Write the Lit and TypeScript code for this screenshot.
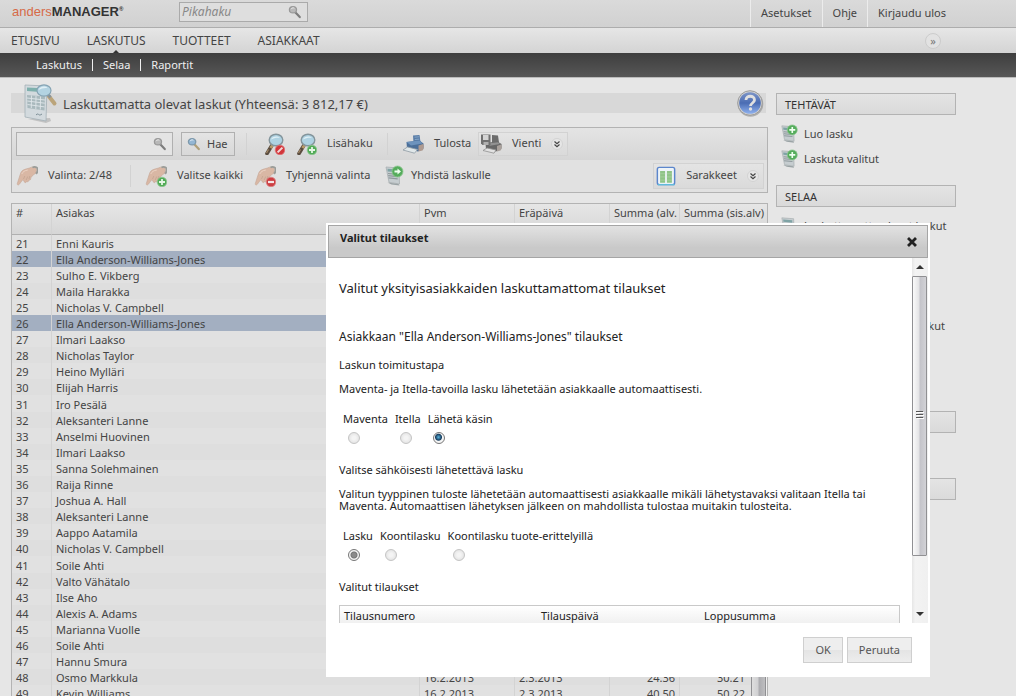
import { LitElement, html, css, svg, nothing } from "lit";
import { customElement, property } from "lit/decorators.js";
import { classMap } from "lit/directives/class-map.js";

const plus = svg`<circle cx="17" cy="17" r="4.800" fill="#52ab57" stroke="#8fc892" stroke-width=".8"/><path d="M17 14v6M14 17h6" stroke="#e4f5e4" stroke-width="1.800"/>`;
const minus = svg`<circle cx="17" cy="17" r="4.800" fill="#cc3f43" stroke="#dd8587" stroke-width=".8"/><path d="M14 17h6" stroke="#f4e6e6" stroke-width="2.200"/>`;
const banned = svg`<circle cx="17" cy="17" r="4.800" fill="#d2363a" stroke="#e07377" stroke-width=".8"/><path d="M14.600 19.400l4.800-4.800" stroke="#f0dada" stroke-width="2"/>`;
const lens = svg`<path d="M8.500 13L4 20.500" stroke="#5a4c3f" stroke-width="3.600" stroke-linecap="round"/><path d="M10 11.500L7.500 15" stroke="#b89a6a" stroke-width="2.800"/><path d="M5.500 16.500l-2 3.500" stroke="#a58a68" stroke-width="1.200"/><ellipse cx="13" cy="7" rx="6.800" ry="5.800" fill="#aed2e2" stroke="#84959c" stroke-width="1.400"/><path d="M8 6.500c1-3 6-4 9-1.600-3-.6-6 0-9 1.600z" fill="#e0f0f6"/>`;
const hand = svg`<path d="M20.500 4c-1-2-5-2.500-7-1L9 4.300C6.500 5 5 6.500 4.200 9.500L1.300 18.500c-.4 1.500 1.200 2 2 .8l3.200-4.300 1 .2 1 2c.8.9 2 .3 1.800-.8l1 .3c1 .2 1.500-.7 1.300-1.500l1.200-.2c1-.3 1.200-1.300.8-2l2.500-3 3-2z" fill="#d9b7a4" stroke="#c4a695" stroke-width=".6"/><path d="M16.500 2.500c2-1.200 4.800-.5 5.300 1.800 0 1.900-.6 3.500-1.800 4.500" fill="none" stroke="#9a9c98" stroke-width="1.800"/><path d="M7.500 14l1.300-3M10.200 15l1.500-3.500M12.900 14l1-3" stroke="#bb9d8b" stroke-width=".6" fill="none"/><path d="M5.800 9c1-2.300 3-3.500 6-4" stroke="#ecd3c4" fill="none"/>`;
const sheet = svg`<path d="M2 2l13 1 .5 16-10.500-1.700z" fill="#c6cdd0" stroke="#a3abad" stroke-width=".7"/><path d="M3.500 3.800l10 .8v2.700l-9.800-.9z" fill="#7fa3a5"/><path d="M4 8.500l9.500.9M4.200 10.700l9.400.9M4.500 12.900l9.200.9" stroke="#8f999c" stroke-width="1.200"/><path d="M3.500 17.500l11 1.600 1 1.500-8-1z" fill="#9aa3a5"/>`;

const icons: Record<string, unknown> = {
  clear: svg`${lens}${banned}`,
  more: svg`${lens}${plus}`,
  hand,
  handPlus: svg`${hand}${plus}`,
  handMinus: svg`${hand}${minus}`,
  sheetPlus: svg`${sheet}<circle cx="13.500" cy="6.500" r="5.500" fill="#55ac5c" stroke="#8fc892" stroke-width=".8"/><path d="M13.500 3.200v6.600M10.200 6.500h6.600" stroke="#effff0" stroke-width="1.800"/>`,
  sheetArrow: svg`${sheet}<circle cx="13.500" cy="6.500" r="5.500" fill="#55ac5c" stroke="#8fc892" stroke-width=".8"/><path d="M10.500 5.500h3v-2l3.500 3-3.500 3v-2h-3z" fill="#effff0"/>`,
  sheet,
  printer: svg`<path d="M11 2.500l6.500-.5 1 7-7 1z" fill="#577ba6"/><path d="M12.500 4.200l4.500-.4M12.800 6.500l4.600-.4" stroke="#86a6c8"/><path d="M4.500 9l13-1.500 4 3v5L16 18.500l-11-3z" fill="#4b6f99"/><path d="M4.500 9l13-1.500 3 3L9 12.500z" fill="#6d93bd"/><path d="M16.500 12.500l4.500-1.500c1.200 1 1 4.500-.5 6.500l-4 1z" fill="#ae9a90"/><path d="M1 17l4.500-3 10 2.500-3 3.700z" fill="#e0e7e9" stroke="#8f9ba3" stroke-width=".8"/>`,
  exporter: svg`<path d="M12 2l6 .5 1 7-7 1z" fill="#6c6c6c"/><path d="M5.500 10l12-1.500 4 2.500v4.500L16 18.500 6 16z" fill="#676767"/><path d="M7 10.500l11-1.200 2 1.700-10 1.700z" fill="#929292"/><path d="M17 13l4-1.500c1.200 1 1 4-.5 6l-3.500 1z" fill="#a9a19c"/><path d="M3 17.500l4-2.500 9 2-2 3.200z" fill="#e2e2e2" stroke="#909090" stroke-width=".8"/><path d="M1 1.500h9.500V12H2.500L1 10.500z" fill="#707070"/><path d="M3 2h5.500v5H3z" fill="#d4d4d4"/><path d="M3.500 9h5v3h-5z" fill="#b0b0b0"/>`,
  columns: svg`<rect x="1.500" y="1.500" width="19" height="19" rx="2" fill="#eef4f8" stroke="#5c86cc" stroke-width="1.600"/><path d="M2 20.500h18.500" stroke="#60bbdc" stroke-width="1.500"/><path d="M4.500 5.500h5.500v13H4.500zM12 5.500h5.500v13H12z" fill="#8fc487"/><path d="M4.500 8.500h5.500M4.500 12h5.500M4.500 15.500h5.500M12 8.500h5.500M12 12h5.500M12 15.500h5.500" stroke="#a9d2a2" stroke-width=".8"/>`,
  search: svg`<path d="M11 11l7.500 8" stroke="#7d7d7d" stroke-width="3.400" stroke-linecap="round"/><ellipse cx="7.800" cy="7.500" rx="5.600" ry="5" fill="#b8b8b8" stroke="#999" stroke-width="2"/><path d="M5 6.500c1-2 3-2.500 5-1.500" stroke="#eee" stroke-width="1.500" fill="none"/>`,
  searchColor: svg`<path d="M11.500 11.500l7 7.500" stroke="#b0a07a" stroke-width="3.600" stroke-linecap="round"/><ellipse cx="8" cy="7.500" rx="5.800" ry="5" fill="#93b6d3" stroke="#7d98aa" stroke-width="2"/><path d="M5 6.500c1-2 3-2.500 5-1.500" stroke="#eef6fb" stroke-width="1.500" fill="none"/>`,
};

const icon = (name: string, cls = "icon") =>
  html`<svg class=${cls} viewBox="0 0 22 22" aria-hidden="true">${icons[name]}</svg>`;

const chevron = html`<svg class="chevron" viewBox="0 0 12 12" aria-hidden="true"><circle cx="6" cy="6" r="5.500" fill="#e6e6e6" stroke="#d2d2d2"/><path d="M3.500 3.500L6 5.700l2.500-2.200M3.500 6.500L6 8.700l2.500-2.200" fill="none" stroke="#444" stroke-width="1.200"/></svg>`;

interface Row { name: string; date?: string; due?: string; net?: string; gross?: string }

const rows: Row[] = [
  ...[
    "Enni Kauris", "Ella Anderson-Williams-Jones", "Sulho E. Vikberg", "Maila Harakka", "Nicholas V. Campbell",
    "Ella Anderson-Williams-Jones", "Ilmari Laakso", "Nicholas Taylor", "Heino Mylläri", "Elijah Harris",
    "Iro Pesälä", "Aleksanteri Lanne", "Anselmi Huovinen", "Ilmari Laakso", "Sanna Solehmainen", "Raija Rinne",
    "Joshua A. Hall", "Aleksanteri Lanne", "Aappo Aatamila", "Nicholas V. Campbell", "Soile Ahti",
    "Valto Vähätalo", "Ilse Aho", "Alexis A. Adams", "Marianna Vuolle", "Soile Ahti", "Hannu Smura",
  ].map((name) => ({ name })),
  { name: "Osmo Markkula", date: "16.2.2013", due: "2.3.2013", net: "24.36", gross: "30.21" },
  { name: "Kevin Williams", date: "16.2.2013", due: "2.3.2013", net: "40.50", gross: "50.22" },
];
const firstRow = 21;
const selected = new Set([22, 26]);

const base = css`
  * { box-sizing: border-box; }
  button, input { font: inherit; color: inherit; margin: 0; }
  a { color: inherit; text-decoration: none; }
  h1, h2, h3, h4, p, ul { margin: 0; padding: 0; font-weight: 400; list-style: none; }
  .icon { width: 22px; height: 22px; flex: none; display: block; }
`;

@customElement("side-bar")
class SideBar extends LitElement {
  static styles = [base, css`
    :host { display: block; }
    h2 { height: 22px; border: 1px solid #b3b3b3; background: linear-gradient(#e4e4e4, #dadada); padding-left: 8px; line-height: 22px; font-size: 11px; color: #333; }
    ul { padding: 6px 0 14px; }
    a { display: flex; align-items: center; gap: 4px; min-height: 25px; padding: 5px 0 5px 4px; line-height: 12px; }
    .icon { width: 20px; height: 22px; margin: -4px 0; }
  `];
  sections = [
    { title: "TEHTÄVÄT", icon: "sheetPlus", links: ["Luo lasku", "Laskuta valitut"] },
    { title: "SELAA", icon: "sheet", links: ["Laskuttamatta olevat laskut", "Kaikki laskut", "Avoimet laskut", "Erääntyneet laskut", "Maksukehotukset ja -laskut", "Hyvityslaskut", "Luottotappiokirjaukset kuukausittain"] },
    { title: "RAPORTIT", icon: "sheet", links: ["Myynti"] },
    { title: "MUUT", icon: "sheet", links: ["Ohjeet"] },
  ];
  render() {
    return this.sections.map((s) => html`
      <section>
        <h2>${s.title}</h2>
        <ul>${s.links.map((l) => html`<li><a href="#">${icon(s.icon)}<span>${l}</span></a></li>`)}</ul>
      </section>`);
  }
}

@customElement("scroll-track")
class ScrollTrack extends LitElement {
  @property({ type: Number }) size = 77;
  @property({ type: Boolean }) plain = false;
  static styles = css`
    :host { display: flex; flex-direction: column; align-items: center; width: 16px; background: linear-gradient(90deg, #e6e6e6, #f3f3f3 20%, #f0f0f0); }
    .arrow { height: 18px; flex: none; display: flex; align-items: center; }
    .area { flex: 1; width: 100%; }
    .thumb { box-sizing: border-box; width: 15px; border: 1px solid #909093; border-radius: 1px; background: linear-gradient(90deg, #fafafa, #e4e4e6 45%, #c4c4ca 55%, #d2d2d6); display: flex; align-items: center; justify-content: center; }
    .plain { background: linear-gradient(90deg, #dedede, #d0d0d2 45%, #acacb0 55%, #bebec0); }
    svg { display: block; }
  `;
  render() {
    const arrow = (d: string) => this.plain ? nothing : html`<div class="arrow"><svg width="8" height="4"><path d=${d} fill="#333"/></svg></div>`;
    return html`
      ${arrow("M0 4l4-4 4 4z")}
      <div class="area"><div class="thumb ${this.plain ? "plain" : ""}" style="height:${this.size}%">
        <svg width="8" height="9"><path d="M0 .5h7M0 3.500h7M0 6.500h7" stroke="#555"/><path d="M1 1.500h7M1 4.500h7M1 7.500h7" stroke="#fff"/></svg>
      </div></div>
      ${arrow("M0 0l4 4 4-4z")}`;
  }
}

@customElement("order-dialog")
class OrderDialog extends LitElement {
  static styles = [base, css`
    :host { display: block; background: #fff; padding: 2px; color: #222; }
    header { display: flex; justify-content: space-between; height: 33px; padding: 0 10px 0 11px; border: 1px solid #a5a5a5; background: linear-gradient(#e2e2e2, #c9c9c9 70%); }
    h2 { font-size: 11px; font-weight: 700; line-height: 24px; }
    .close { border: 0; background: none; padding: 0; width: 10px; display: flex; align-items: center; }
    .body { display: flex; height: 365px; }
    .content { flex: 1; min-width: 0; overflow: hidden; padding: 20px 12px 0 11px; }
    .lead { font-size: 13px; line-height: 20px; margin-bottom: 29px; }
    .customer { font-size: 12px; line-height: 20px; margin-bottom: 10px; }
    h4 { font-size: 11px; line-height: 16px; }
    .note { line-height: 12px; margin: 10px 0 17px; }
    .choices { display: flex; gap: 7px; border: 0; margin: 0 0 18px; padding: 0 0 0 4px; }
    .choices label { display: flex; flex-direction: column; gap: 6px; line-height: 14px; }
    input { appearance: none; width: 12px; height: 12px; margin-left: 5px; border: 1px solid #c4c4c4; border-radius: 50%; background: radial-gradient(#f4f4f4 25%, #dcdcdc); }
    input:checked { border-color: #777; background: radial-gradient(circle, #8a8a8a 2px, #777 3px, #f5f5f5 4px); }
    .blue input:checked { background: radial-gradient(circle at 45% 42%, #59b5df 0, #173d5f 3px, #f5f5f5 4px); }
    table { width: 100%; margin-top: 10px; border: 1px solid #c9c9c9; border-collapse: separate; border-spacing: 0; table-layout: fixed; background: linear-gradient(#fff, #eee); }
    th { text-align: left; font-weight: 400; height: 20px; padding: 0 4px; }
    .number { width: 197px; } .day { width: 163px; }
    footer { display: flex; justify-content: flex-end; gap: 4px; padding: 14px 16px 12px; }
    footer button { height: 26px; padding: 0 11px; border: 1px solid #cfcfcf; background: linear-gradient(#eee 50%, #e4e4e4 50%, #ededed); color: #555; }
  `];
  choice(name: string, cls: string, options: string[], checked: number) {
    return html`<fieldset class="choices ${cls}">${options.map((o, i) => html`
      <label>${o}<input type="radio" name=${name} ?checked=${i === checked}></label>`)}</fieldset>`;
  }
  render() {
    return html`
      <header><h2>Valitut tilaukset</h2>
        <button class="close" aria-label="Sulje"><svg width="10" height="10"><path d="M2 2l6 6M8 2l-6 6" stroke="#222" stroke-width="2.800" stroke-linecap="square"/></svg></button></header>
      <div class="body">
        <div class="content">
          <h3 class="lead">Valitut yksityisasiakkaiden laskuttamattomat tilaukset</h3>
          <h3 class="customer">Asiakkaan "Ella Anderson-Williams-Jones" tilaukset</h3>
          <h4>Laskun toimitustapa</h4>
          <p class="note">Maventa- ja Itella-tavoilla lasku lähetetään asiakkaalle automaattisesti.</p>
          ${this.choice("delivery", "blue", ["Maventa", "Itella", "Lähetä käsin"], 2)}
          <h4>Valitse sähköisesti lähetettävä lasku</h4>
          <p class="note">Valitun tyyppinen tuloste lähetetään automaattisesti asiakkaalle mikäli lähetystavaksi valitaan Itella tai Maventa. Automaattisen lähetyksen jälkeen on mahdollista tulostaa muitakin tulosteita.</p>
          ${this.choice("type", "", ["Lasku", "Koontilasku", "Koontilasku tuote-erittelyillä"], 0)}
          <h4>Valitut tilaukset</h4>
          <table><thead><tr><th class="number">Tilausnumero</th><th class="day">Tilauspäivä</th><th>Loppusumma</th></tr></thead></table>
        </div>
        <scroll-track .size=${85}></scroll-track>
      </div>
      <footer><button>OK</button><button>Peruuta</button></footer>`;
  }
}

@customElement("app-root")
class AppRoot extends LitElement {
  static styles = [base, css`
    :host { display: block; position: relative; height: 100vh; overflow: hidden; background: #e6e6e6; color: #444; font: 11px/16px "Noto Sans", "Open Sans", sans-serif; }
    .top { display: flex; height: 28px; border-bottom: 1px solid #adadad; background: linear-gradient(#dadada, #d1d1d1); }
    .logo { width: 179px; padding-left: 12px; font: 700 13px/24px "Liberation Sans", sans-serif; color: #333; flex: none; }
    .logo span { font-weight: 400; color: #d66a48; }
    .logo sup { font-size: 6px; line-height: 6px; vertical-align: 5px; }
    .quick { display: flex; align-items: center; width: 129px; height: 20px; margin-top: 2px; border: 1px solid #aaa; background: #dedede; }
    .quick input, .find input { flex: 1; min-width: 0; border: 0; background: none; padding: 0 2px; outline: 0; }
    .quick input { font-size: 12px; font-style: italic; }
    .quick input::placeholder { color: #888; }
    .small { width: 14px; height: 14px; flex: none; display: block; }
    .quick .small, .find .small { margin: 0 5px; }
    .account { display: flex; margin-left: auto; padding-right: 60px; }
    .account a { padding: 0 10px; line-height: 26px; border-left: 1px solid #ececec; }
    .nav { display: flex; align-items: center; gap: 27px; height: 25px; padding: 0 75px 0 11px; background: linear-gradient(#e6e6e6, #d4d4d4); font-size: 12px; }
    .nav a { position: relative; }
    .nav .on::after { content: ""; position: absolute; left: 50%; bottom: -4px; margin-left: -3px; border: 3px solid transparent; border-top: 0; border-bottom-color: #333; }
    .go { margin-left: auto; width: 16px; height: 16px; border: 1px solid #ccc; border-radius: 50%; background: #e2e2e2; padding: 0; font-size: 11px; line-height: 12px; color: #777; }
    .sub { display: flex; align-items: center; height: 25px; padding-left: 26px; border-bottom: 1px solid #bbb; background: linear-gradient(#3e3e3e, #575757); color: #f0f0f0; }
    .sub a { padding: 0 10px; line-height: 12px; }
    .sub a + a { border-left: 1px solid #f0f0f0; }
    .page { display: grid; grid-template-columns: minmax(0, 1fr) 180px; gap: 8px; padding: 15px 60px 0 11px; }
    .title { display: flex; align-items: center; height: 20px; margin-right: 2px; padding-left: 8px; background: #d8d8d8; }
    h1 { flex: 1; font-size: 13px; line-height: 20px; padding-top: 2px; }
    .big { width: 44px; height: 44px; flex: none; }
    .help { border: 0; background: none; padding: 0; width: 28px; height: 28px; margin-right: 2px; }
    .tools { margin-top: 14px; border: 1px solid #b3b3b3; background: #e1e1e1; }
    .line { display: grid; align-items: center; height: 32px; }
    .line.one { grid-template-columns: 165px 65px 17px 32px 92px 15px 76px 1fr; background: linear-gradient(#e4e4e4, #d6d6d6); padding-left: 4px; }
    .line.two { grid-template-columns: 114px 15px 109px 130px 1fr auto; padding: 0 3px 0 4px; }
    .find { display: flex; align-items: center; width: 157px; height: 24px; border: 1px solid #b0b0b0; background: #e4e4e4; }
    .hae { display: flex; align-items: center; gap: 6px; width: 54px; height: 24px; padding: 0 5px; border: 1px solid #b0b0b0; background: linear-gradient(#e4e4e4, #d8d8d8); }
    .tool { display: flex; align-items: center; gap: 10px; border: 0; background: none; padding: 0; line-height: 14px; white-space: nowrap; text-align: left; }
    .tool span { padding-bottom: 2px; }
    .tight { gap: 5px; }
    .drop { width: max-content; height: 24px; padding: 0 4px 0 1px; border: 1px solid #d2d2d2; background: linear-gradient(#e4e4e4, #dadada); }
    .line.two .drop { height: 26px; padding-left: 2px; }
    .line.two .drop .icon { width: 20px; height: 20px; }
    .chevron { width: 12px; height: 12px; }
    .sep { width: 1px; height: 22px; background: #d2d2d2; }
    .list { position: relative; margin-top: 10px; border: 1px solid #b3b3b3; }
    .rail { position: absolute; top: 31px; right: 0; bottom: 0; }
    table { width: 100%; table-layout: fixed; border-collapse: separate; border-spacing: 0; }
    th { height: 31px; padding: 1px 4px; text-align: left; vertical-align: top; font-weight: 400; border-bottom: 1px solid #b0b0b0; background: linear-gradient(#e6e6e6, #d6d6d6); white-space: nowrap; overflow: hidden; }
    td { height: 16px; padding: 2px 4px 0; line-height: 14px; white-space: nowrap; background: #e1e1e1; }
    th + th, td + td { border-left: 1px solid #d3d3d3; }
    tr:nth-child(even) td { background: #dedede; }
    tr:nth-child(10n + 11) td { height: 17px; }
    tr.picked td { background: #a3afc1; }
    .num { width: 39px; } .date { width: 95px; } .sum { width: 70px; } .total { width: 88px; }
    td.right { text-align: right; }
    td.right:last-child { padding-right: 22px; }
    .dialog { position: absolute; top: 223px; left: 326px; width: 604px; }
  `];
  render() {
    return html`
      <header class="top">
        <div class="logo"><span>anders</span>MANAGER<sup>®</sup></div>
        <label class="quick"><input type="search" placeholder="Pikahaku" aria-label="Pikahaku">${icon("search", "small")}</label>
        <nav class="account"><a href="#">Asetukset</a><a href="#">Ohje</a><a href="#">Kirjaudu ulos</a></nav>
      </header>
      <nav class="nav">
        <a href="#">ETUSIVU</a><a href="#" class="on">LASKUTUS</a><a href="#">TUOTTEET</a><a href="#">ASIAKKAAT</a>
        <button class="go">»</button>
      </nav>
      <nav class="sub"><a href="#">Laskutus</a><a href="#">Selaa</a><a href="#">Raportit</a></nav>
      <div class="page">
        <main>
          <div class="title">
            <svg class="big" viewBox="0 0 44 44" aria-hidden="true">
              <path d="M9 38l18 4 5-2-1-3z" fill="#aaa" opacity=".6"/>
              <path d="M6 4l22 1-1 35-21-4z" fill="#d3dade" stroke="#a3b0b6" stroke-width=".8"/>
              <path d="M8 6.500l10 .6v3.700l-10-.8z" fill="#7fb0ad"/>
              <path d="M8 14l18 1.500-.5 14-17-2.600z" fill="#a9b9bd"/>
              <path d="M8 17l18 2M8.300 20l17.500 2.200M8.500 23.500l17 2.400M12.500 14.500l-.2 12.500M17 15l-.2 13M21.500 15.500l-.2 13" stroke="#e0e7ea" stroke-width=".9"/>
              <path d="M17 34c3-3 2 2 6-1" stroke="#7b8d95" fill="none"/>
              <path d="M30 15.500l5.500 7" stroke="#bba47a" stroke-width="4" stroke-linecap="round"/>
              <path d="M29 13.500l2.500 3" stroke="#8b949a" stroke-width="3"/>
              <ellipse cx="25" cy="9.500" rx="7" ry="5.600" fill="#b3d3e2" stroke="#85a3b3" stroke-width="1.200"/>
              <path d="M19.500 9c1-3.500 6.500-4.500 9-2-3.500-.4-6 .2-9 2z" fill="#e0eff5"/>
            </svg>
            <h1>Laskuttamatta olevat laskut (Yhteensä: 3 812,17 €)</h1>
            <button class="help" aria-label="Ohje"><svg width="28" height="28" viewBox="0 0 28 28">
              <defs><linearGradient id="q" x1="0" y1="0" x2="0" y2="1"><stop offset="0" stop-color="#7d95c8"/><stop offset=".5" stop-color="#4a6cb3"/><stop offset="1" stop-color="#8fb1ee"/></linearGradient></defs>
              <circle cx="14.500" cy="15" r="12.800" fill="#8c8c8c" opacity=".6"/><circle cx="14" cy="14" r="12.300" fill="#d0d0d0" stroke="#9b9b9b"/><circle cx="14" cy="14" r="10.800" fill="url(#q)"/>
              <path d="M10 11c0-5 8.500-5 8.500 0 0 3-4 3-4 6" fill="none" stroke="#e0e0e0" stroke-width="2.800"/><circle cx="14.500" cy="20" r="1.700" fill="#e0e0e0"/></svg></button>
          </div>
          <div class="tools">
            <div class="line one">
              <label class="find"><input type="text" aria-label="Haku">${icon("search", "small")}</label>
              <button class="hae">${icon("searchColor", "small")}Hae</button>
              <span class="sep"></span>
              <button class="tool" aria-label="Tyhjennä haku">${icon("clear")}</button>
              <button class="tool">${icon("more")}<span>Lisähaku</span></button>
              <span class="sep"></span>
              <button class="tool">${icon("printer")}<span>Tulosta</span></button>
              <button class="tool drop">${icon("exporter")}<span>Vienti</span> ${chevron}</button>
            </div>
            <div class="line two">
              <span class="tool">${icon("hand")}<span>Valinta: 2/48</span></span>
              <span class="sep"></span>
              <button class="tool">${icon("handPlus")}<span>Valitse kaikki</span></button>
              <button class="tool">${icon("handMinus")}<span>Tyhjennä valinta</span></button>
              <button class="tool tight">${icon("sheetArrow")}<span>Yhdistä laskulle</span></button>
              <button class="tool drop">${icon("columns")}<span>Sarakkeet</span> ${chevron}</button>
            </div>
          </div>
          <div class="list">
            <table>
              <thead><tr><th class="num">#</th><th>Asiakas</th><th class="date">Pvm</th><th class="date">Eräpäivä</th><th class="sum">Summa (alv.</th><th class="total">Summa (sis.alv)</th></tr></thead>
              <tbody>${rows.map((r, i) => html`
                <tr class=${classMap({ picked: selected.has(firstRow + i) })}>
                  <td>${firstRow + i}</td><td>${r.name}</td><td>${r.date ?? nothing}</td><td>${r.due ?? nothing}</td>
                  <td class="right">${r.net ?? nothing}</td><td class="right">${r.gross ?? nothing}</td>
                </tr>`)}</tbody>
            </table>
            <scroll-track class="rail" plain .size=${100}></scroll-track>
          </div>
        </main>
        <side-bar></side-bar>
      </div>
      <order-dialog class="dialog" role="dialog" aria-label="Valitut tilaukset"></order-dialog>`;
  }
}
